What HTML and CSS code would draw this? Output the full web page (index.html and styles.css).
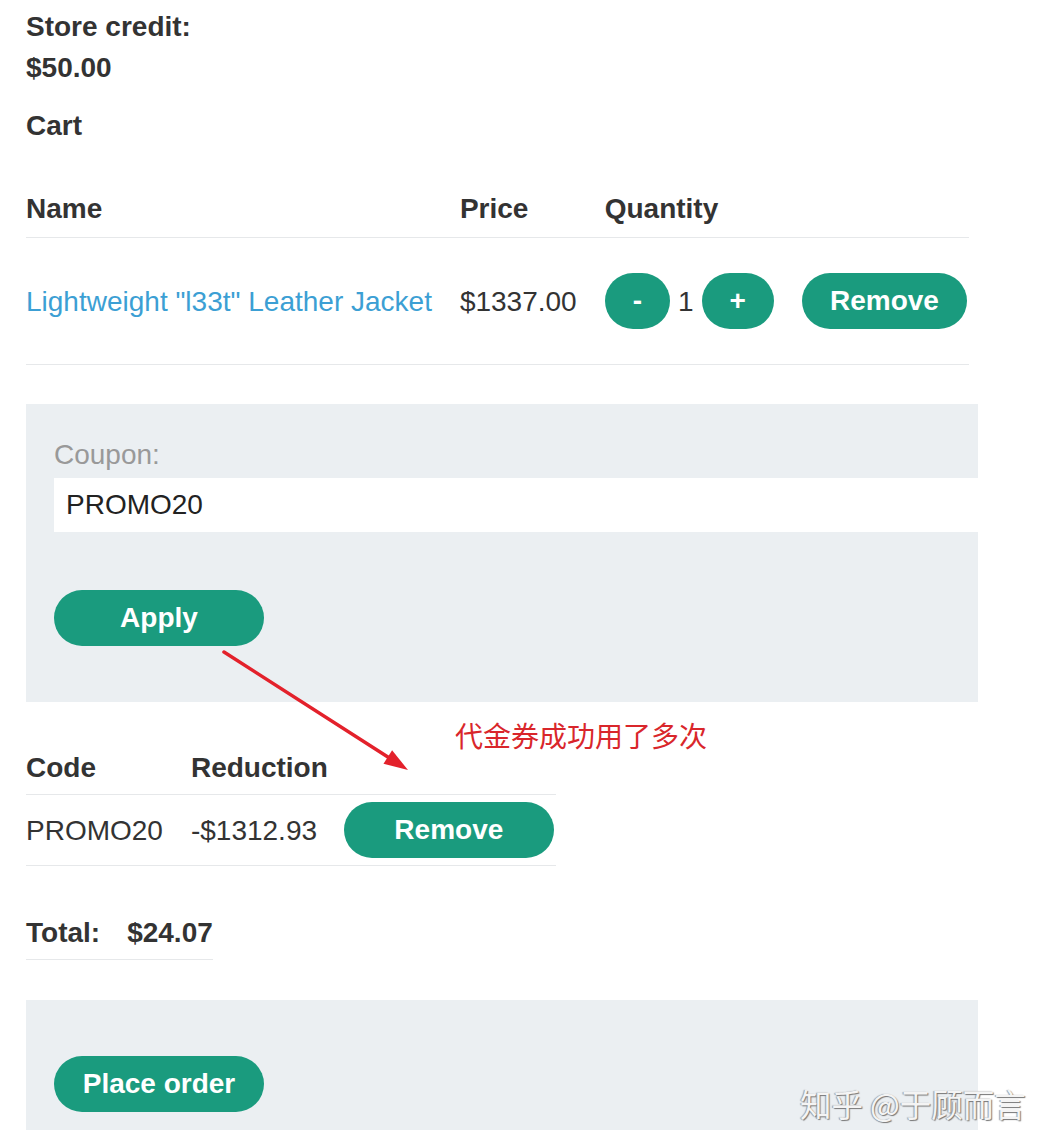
FILE: index.html
```html
<!DOCTYPE html>
<html>

<head>
    <title>Cart</title>
    <link rel="stylesheet" href="styles.css">
</head>

<body>
    <div class="page">
        <div class="credit">
            Store credit:<br>
            $50.00
        </div>
        <h2 class="title">Cart</h2>

        <table class="cart">
            <tr>
                <th>Name</th>
                <th>Price</th>
                <th class="last">Quantity</th>
            </tr>
            <tr>
                <td><a href="#">Lightweight "l33t" Leather Jacket</a></td>
                <td>$1337.00</td>
                <td class="last">
                    <div class="qty">
                        <button class="btn">-</button>
                        <span>1</span>
                        <button class="btn">+</button>
                        <button class="btn remove">Remove</button>
                    </div>
                </td>
            </tr>
        </table>

        <div class="panel">
            <label class="label" for="coupon">Coupon:</label>
            <input id="coupon" class="input" type="text" value="PROMO20">
            <button class="btn wide apply">Apply</button>
        </div>

        <table class="codes">
            <tr>
                <th>Code</th>
                <th class="reduction">Reduction</th>
                <th class="last"></th>
            </tr>
            <tr>
                <td>PROMO20</td>
                <td class="reduction">-$1312.93</td>
                <td class="last"><button class="btn wide">Remove</button></td>
            </tr>
        </table>

        <table class="total">
            <tr>
                <th>Total:</th>
                <th class="last">$24.07</th>
            </tr>
        </table>

        <div class="panel order">
            <button class="btn wide">Place order</button>
        </div>

        <!-- annotation drawn over the screenshot -->
        <svg class="arrow" width="1055" height="1148" viewBox="0 0 1055 1148">
            <line x1="224" y1="652" x2="391" y2="759" stroke="#e3212b" stroke-width="3.5" stroke-linecap="round" />
            <polygon points="408,770 383.5,763.7 392.1,750.3" fill="#e3212b" />
        </svg>
        <div class="note">代金券成功用了多次</div>
        <div class="mark">知乎 @于顾而言</div>
    </div>
</body>

</html>
```

FILE: styles.css
```css
body {
    margin: 0;
    background: #fff;
    color: #333;
    font-family: "Liberation Sans", Arial, sans-serif;
    font-size: 28px;
    line-height: 41px;
}

.page {
    position: relative;
    padding: 6px 26px 0;
    height: 1142px;
    overflow: hidden;
}

.credit {
    font-weight: bold;
}

.title {
    margin: 17px 0 34px;
    font-size: 28px;
    line-height: 41px;
}

table {
    border-collapse: collapse;
}

th {
    text-align: left;
    font-weight: bold;
    padding: 8px 28px 8px 0;
    border-bottom: 1px solid #e6e8ea;
}

td {
    padding: 35px 28px 35px 0;
    border-bottom: 1px solid #e6e8ea;
    white-space: nowrap;
}

th.last,
td.last {
    padding-right: 2px;
}

a {
    color: #3c9fd4;
    text-decoration: none;
}

.qty {
    display: flex;
    align-items: center;
    gap: 8px;
}

.btn {
    height: 56px;
    padding: 0 28px;
    border: none;
    border-radius: 28px;
    background-color: #1a9b7e;
    color: #fff;
    font-family: "Liberation Sans", Arial, sans-serif;
    font-size: 28px;
    font-weight: bold;
    cursor: pointer;
}

.remove {
    margin-left: 20px;
}

.wide {
    width: 210px;
}

.panel {
    width: 924px;
    margin-top: 39px;
    background-color: #ebeff2;
    padding: 30px 0 56px 28px;
}

.label {
    display: block;
    color: #999;
}

.input {
    display: block;
    box-sizing: border-box;
    width: 100%;
    height: 54px;
    margin: 3px 0 58px;
    padding: 0 12px;
    border: none;
    background: #fff;
    color: #222;
    font-family: "Liberation Sans", Arial, sans-serif;
    font-size: 28px;
}

.codes {
    margin-top: 39px;
}

.codes th {
    padding-top: 6px;
    padding-bottom: 6px;
}

.codes td {
    padding-top: 7px;
    padding-bottom: 7px;
}

.codes .reduction {
    padding-right: 16px;
}

.total {
    margin-top: 40px;
}

.total th {
    padding-top: 6px;
    padding-bottom: 6px;
    padding-right: 27px;
}

.total th.last {
    padding-right: 0;
}

.order {
    margin-top: 40px;
    padding: 56px 0 18px 28px;
}

.arrow {
    position: absolute;
    left: 0;
    top: 0;
}

.note {
    position: absolute;
    left: 455px;
    top: 716px;
    color: #d9262b;
    font-family: "Noto Sans CJK SC", sans-serif;
    font-size: 28px;
    line-height: 38px;
    white-space: nowrap;
}

.mark {
    position: absolute;
    left: 800px;
    top: 1083px;
    color: #f4f4f4;
    font-family: "Noto Sans CJK SC", sans-serif;
    font-size: 31.5px;
    line-height: 40px;
    white-space: nowrap;
    text-shadow: 1px 1px 1px #777, -1px 0 1px #999;
}
```
